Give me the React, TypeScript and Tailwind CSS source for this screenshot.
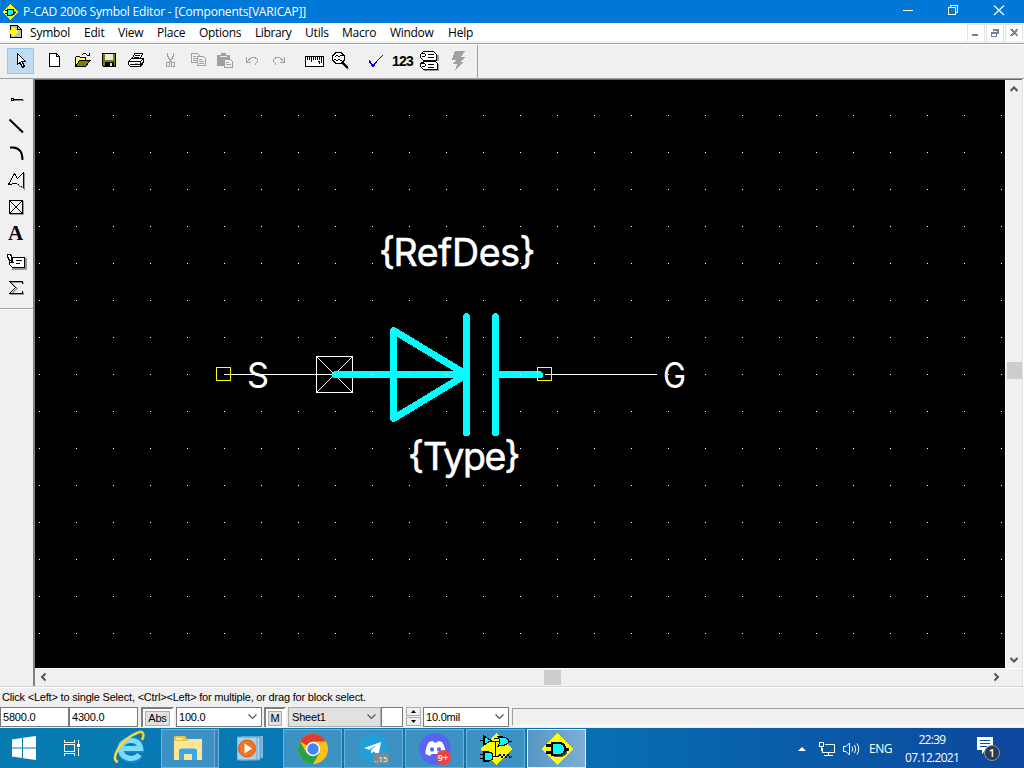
import type { ReactNode } from 'react';

const UI = 'font-["Open_Sans","Noto_Sans",sans-serif]';

type IconProps = { children: ReactNode; cls?: string };

function Tool({ children, cls = '' }: IconProps) {
  return (
    <span className={`block h-[26px] w-[27px] shrink-0 ${cls}`}>
      <svg width="27" height="26" viewBox="0 0 27 26" shapeRendering="crispEdges" fill="none" stroke="#000" strokeWidth="1">
        {children}
      </svg>
    </span>
  );
}

function SideTool({ children }: IconProps) {
  return (
    <svg className="block shrink-0" width="27" height="27" viewBox="0 0 27 27" shapeRendering="crispEdges" fill="none" stroke="#000">
      {children}
    </svg>
  );
}

function Gate({ size, className = '' }: { size: number; className?: string }) {
  return (
    <svg className={className} width={size} height={size} viewBox="0 0 32 32" shapeRendering="crispEdges">
      <path d="M16 0L32 16L16 32L0 16Z" fill="#ff0" />
      <path d="M13 11H21Q26 13 26 18T21 24H13Z" fill="#555" />
      <path d="M5 12.5H12M5 19.5H12M23 16.5H28" stroke="#000" strokeWidth="2.4" />
      <path d="M11 10H19Q24 11 24 16T19 22H11Z" fill="#0ff" stroke="#000" strokeWidth="2" />
    </svg>
  );
}

function TitleBar() {
  return (
    <div className="flex h-[23px] shrink-0 items-center bg-[#0078d7] text-white">
      <Gate size={16} className="ml-[2px]" />
      <span className="ml-[5px] w-[300px] whitespace-pre text-[12px] leading-[23px] tracking-[-0.19px]">P-CAD 2006 Symbol Editor - [Components[VARICAP]]</span>
      <svg className="ml-auto mr-[19px]" width="102" height="23" viewBox="903 0 102 23" fill="none" stroke="#fff" shapeRendering="crispEdges">
        <path d="M903 10.5H913" />
        <path d="M948.5 7.5H955.5V14.5H948.5ZM950.5 7.5V5.5H957.5V12.5H955.5" />
        <path d="M994 5.500L1004 15M1004 5.500L994 15" shapeRendering="auto" strokeWidth="1.2" />
      </svg>
    </div>
  );
}

function MenuBar() {
  return (
    <div className="flex h-[18px] shrink-0 bg-white text-[12px] leading-[19px] text-black">
      <svg className="ml-[8px] mt-px w-[14px]" width="14" height="15" viewBox="0 0 14 15" shapeRendering="crispEdges">
        <path d="M2.500 1.500H9.500L13.500 5.500V13.500H2.500Z" fill="#c0c0c0" stroke="#000" />
        <path d="M9.500 1.500V5.500H13.500" fill="none" stroke="#000" />
        <path d="M5 3L10 8L5 13L0 8Z" fill="#ff0" />
      </svg>
      <span className="ml-[8px] w-[54px] tracking-[-0.2px]">Symbol</span>
      <span className="w-[34px] tracking-[-0.2px]">Edit</span>
      <span className="w-[39px] tracking-[-0.2px]">View</span>
      <span className="w-[42px] tracking-[-0.2px]">Place</span>
      <span className="w-[56px] tracking-[-0.3px]">Options</span>
      <span className="w-[50px] tracking-[-0.4px]">Library</span>
      <span className="w-[37px] tracking-[-0.2px]">Utils</span>
      <span className="w-[48px] tracking-[-0.2px]">Macro</span>
      <span className="w-[58px] tracking-[-0.3px]">Window</span>
      <span className="tracking-[-0.2px]">Help</span>
      <div className="ml-auto mr-px mt-px flex gap-px">
        {[
          'M5 10H11V12H5Z',
          'M7 5H13V10H11V7H7ZM5 8H11V13H5ZM6 10V12H10V10Z',
          'M5 5H8L9.500 7L11 5H13V6L11 8.500L13 11V12H11L9.500 10L8 12H5V11L7.500 8.500L5 6Z',
        ].map((d) => (
          <svg key={d} className="border border-[#e3e3e3] bg-white" width="18" height="18" viewBox="0 0 18 18" shapeRendering="crispEdges">
            <path d={d} fill="#748494" fillRule="evenodd" />
          </svg>
        ))}
      </div>
    </div>
  );
}

function Toolbar() {
  return (
    <div className="flex h-[33px] shrink-0 bg-[#f0f0f0]">
      <div className="flex h-[33px] w-[478px] border-r border-[#a0a0a0] pl-[7px] pt-[3px]">
        <Tool cls="bg-[#bfdcf3] outline outline-1 -outline-offset-1 outline-[#90c8f6]">
          <path d="M10.500 5.500V16.500L13 14.500L15.500 19.500L17.500 18.500L15 13.500H18.500Z" fill="#fff" />
        </Tool>
        <Tool cls="ml-[7px]">
          <path d="M8.500 5.500H15.500L18.500 8.500V18.500H8.500Z" fill="#fff" />
          <path d="M15.500 5.500V8.500H18.500" />
        </Tool>
        <Tool>
          <path d="M7.500 18V9.500L8.500 8.500H11.500L12.500 9.500H17.500V12.500" fill="#ffff80" />
          <path d="M8 9H11L12 10H17V12H12L8 17Z" fill="#ffff60" stroke="none" />
          <path d="M7.500 18.500L11.500 12.500H22L17.500 18.500Z" fill="#808000" />
          <path d="M14 6.500H15M15 5.500H18M18 6.500H19M19 7.500H22M21.500 5V8" />
        </Tool>
        <Tool>
          <path d="M7.500 5.500H20.500V18.500H8.500L7.500 17.500Z" fill="#808000" />
          <path d="M10 6H18V12H10Z" fill="#e8e8e8" stroke="none" />
          <path d="M10 13.500H19V19H10Z" fill="#000" stroke="none" />
          <path d="M15 15H17V18H15Z" fill="#e8e8e8" stroke="none" />
        </Tool>
        <Tool>
          <path d="M10.500 10.500L12.500 5.500H20.500L18.500 10.500Z" fill="#fff" />
          <path d="M13 7.500H18M12 9.500H17" />
          <path d="M6.500 13.500L9.500 10.500H21.500V14.500L18.500 18.500H8.500L6.500 16.500Z" fill="#fff" />
          <path d="M7 13.500H18.500V18M18.500 13.500L21 11M8 16.500H18M19 16L22 13" />
          <path d="M13 15H16" stroke="#cc0" />
        </Tool>
        <Tool cls="ml-[7px]">
          <g stroke="#a0a0a0">
            <path d="M11.500 5V8L15.500 14M17.500 5V8L13.500 14" strokeWidth="1.4" />
            <path d="M10.500 14.500H13.500V18.500H10.500ZM15.500 14.500H18.500V18.500H15.500Z" />
          </g>
        </Tool>
        <Tool>
          <g stroke="#a0a0a0" fill="#f0f0f0">
            <path d="M8.500 5.500H14.500L16.500 7.500V14.500H8.500Z" />
            <path d="M10 8.500H13M10 10.500H14M10 12.500H14" />
            <path d="M14.500 8.500H20.500L22.500 10.500V17.500H14.500Z" />
            <path d="M16 11.500H19M16 13.500H21M16 15.500H21" />
          </g>
        </Tool>
        <Tool>
          <path d="M7 7H11V5H16V7H20V18H7Z" fill="#a0a0a0" stroke="none" />
          <path d="M10 8.500H17" stroke="#f0f0f0" />
          <path d="M14.500 11.500H20.500L22.500 13.500V19.500H14.500Z" stroke="#a0a0a0" fill="#f0f0f0" />
          <path d="M16 14.500H19M16 16.500H21" stroke="#a0a0a0" />
        </Tool>
        <Tool>
          <path d="M9.500 9V14.500H14M10 14L13 10.500L15 9.500H18L20.500 11.500V13.500L18 16.500" stroke="#a0a0a0" />
        </Tool>
        <Tool>
          <path d="M20.500 9V14.500H16M20 14L17 10.500L15 9.500H12L9.500 11.500V13.500L12 16.500" stroke="#a0a0a0" />
        </Tool>
        <Tool cls="ml-[10px]">
          <path d="M4.500 8.500H22.500V18.500H4.500Z" fill="#fff" strokeWidth="1.4" />
          <path d="M6.500 9V12M8.500 9V12M10.500 9V14M12.500 9V12M14.500 9V12M16.500 9V12M18.500 9V12M20.500 9V15M18.500 13V16M17 13.500H18" />
        </Tool>
        <Tool>
          <path d="M15 16L20.500 21.500" stroke="#999" strokeWidth="2" />
          <path d="M14.500 14.500L20 20" strokeWidth="2.600" />
          <path d="M8 4.500H13L16.500 8V12L13 15.500H8L4.500 12V8Z" fill="#fff" />
          <path d="M7 8.500H8M8 7.500H10M10 8.500H12M12 7.500H15M6 11.500H8M8 12.500H10M10 11.500H12M12 12.500H14" />
        </Tool>
        <Tool cls="ml-[7px]">
          <path d="M7 13.500L11 17.500L20.500 7.500" stroke="#00f" />
          <path d="M7 12.500L11 18.500L14 14" stroke="#00f" strokeWidth="1.6" />
        </Tool>
        <span className='h-[26px] w-[27px] pl-[3px] font-["Liberation_Sans",sans-serif] text-[14px] font-bold leading-[26px] tracking-[-0.8px] text-black'>123</span>
        <Tool>
          <path d="M19 7H23V13H19ZM8 22H23V23H8ZM22 16H23V23H22Z" fill="#999" stroke="none" />
          <path d="M7.500 3.500H17.500L20.500 6.500V12.500H7.500L4.500 9.500V6.500Z" fill="#fff" strokeWidth="1.4" />
          <path d="M6 5.500H9M9.500 6V8M12 6.500H18M12 9.500H18M6 8.500H9" />
          <path d="M8.500 13.500H19.500L21.500 15.500V21.500H7.500L4.500 18.500V15.500Z" fill="#fff" strokeWidth="1.4" />
          <path d="M6 15.500H9M9.500 16V18M12 16.500H18M12 19.500H18M6 18.500H9" />
        </Tool>
        <Tool>
          <path d="M12 3H22L18 9H22L17 14H20L12 23L14 16H10L13 12H9Z" fill="#a0a0a0" stroke="none" />
        </Tool>
      </div>
    </div>
  );
}

function SideBar() {
  return (
    <div className="flex w-[35px] shrink-0 flex-col border-r-2 border-[#808080] bg-[#f0f0f0]">
      <div className="flex h-[230px] flex-col border-b border-[#a0a0a0] pl-[3px] pt-[8px]">
        <SideTool>
          <path d="M11 13.500H21" stroke="#888" />
          <path d="M8.500 11.500H10.500V13.500H8.500ZM11 12.500H20" />
        </SideTool>
        <SideTool>
          <path d="M6.500 5.500L20 18.500" strokeWidth="2" shapeRendering="auto" />
        </SideTool>
        <SideTool>
          <path d="M7 6.500H10C15.500 6.800 19.500 10.500 19.500 19" strokeWidth="2" shapeRendering="auto" />
        </SideTool>
        <SideTool>
          <path d="M20.500 4.500V20.500L13.500 15.500L5.500 16.500L11.500 5.500L14.500 10.500L20.500 4.500" />
          <path d="M21.500 5V21L14 16.500" stroke="#999" />
        </SideTool>
        <SideTool>
          <path d="M7 19.500H20.500V6" stroke="#999" />
          <path d="M6.500 5.500H19.500V18.500H6.500Z" strokeWidth="1.4" />
          <path d="M7 6L19 18M19 6L7 18" />
        </SideTool>
        <span className='h-[27px] w-[27px] pl-[5px] font-["Liberation_Serif",serif] text-[21px] font-bold leading-[23px] text-black'>A</span>
        <SideTool>
          <path d="M9 19.500H22.500V9" stroke="#999" strokeWidth="2" />
          <path d="M9 8.500H21.500V18.500H9.500L6.500 15.500V12" fill="#fff" strokeWidth="1.4" />
          <path d="M4.500 5.500H7L9 8V12L6.500 11L4.500 8Z" fill="#fff" strokeWidth="1.400" />
          <path d="M7 13.500H11M13 11.500H19M13 14.500H17" />
        </SideTool>
        <SideTool>
          <path d="M20.500 8V6.500H8L14 12.500L8 18.500H20.500V16" stroke="#999" />
          <path d="M19.500 8V5.500H6.500L12.500 11.500L6.500 17.500H19.500V15" />
        </SideTool>
      </div>
      <div className="h-px bg-white" />
    </div>
  );
}

const gridX = Array.from({ length: 27 }, (_, i) => 39 + i * 37);
const gridY = Array.from({ length: 15 }, (_, i) => 115 + i * 37);

function Drawing() {
  return (
    <svg className='block bg-black font-["Inter",sans-serif]' width="970" height="588" viewBox="35 80 970 588" shapeRendering="crispEdges" fill="none">
      <g stroke="#fff">
        <path d="M224 374.500H335M545 374.500H657" />
        <path d="M316.500 356.500H352.500V392.500H316.500ZM317 357L352 392M352 357L317 392" />
      </g>
      <g stroke="#0ff" strokeWidth="7" strokeLinecap="round" strokeLinejoin="round">
        <path d="M335.500 374.500H466.500M393.500 330.500L466.500 374.500L393.500 418.500ZM466.500 316.500V432.500M495.500 316.500V432.500M495.500 374.500H539.500" />
      </g>
      <path d="M216.500 367.500H230.500V380.500H216.500ZM537.500 367.500H551.500V380.500H537.500Z" stroke="#ff0" />
      <g fill="#fff" stroke="#fff" strokeWidth="0.6" fontSize="37.5">
        <text>
          <tspan x="379" y="264">{'{'}</tspan>
          <tspan x="393.500" y="265.500" letterSpacing="-0.3">RefDes</tspan>
          <tspan x="519.500" y="264">{'}'}</tspan>
        </text>
        <text>
          <tspan x="408" y="468">{'{'}</tspan>
          <tspan x="423" y="469.500" letterSpacing="-1.5">Type</tspan>
          <tspan x="504.500" y="468">{'}'}</tspan>
        </text>
      </g>
      <g fill="#fff" fontSize="35">
        <text x="247" y="388" textLength="22" lengthAdjust="spacingAndGlyphs">S</text>
        <text x="663" y="388" textLength="23" lengthAdjust="spacingAndGlyphs">G</text>
      </g>
      <g fill="#fff">
        {gridY.map((y) => gridX.map((x) => <rect key={`${x}-${y}`} x={x} y={y} width="1" height="1" />))}
      </g>
    </svg>
  );
}

function Chevron({ dir }: { dir: 'up' | 'down' | 'left' | 'right' }) {
  const d = {
    up: 'M1.500 6L5 2.500L8.500 6',
    down: 'M1.500 3L5 6.500L8.500 3',
    left: 'M6.500 1.500L3 5L6.500 8.500',
    right: 'M3.500 1.500L7 5L3.500 8.500',
  }[dir];
  return (
    <svg width="10" height="10" viewBox="0 0 10 10" fill="none" stroke="#555" strokeWidth="2">
      <path d={d} />
    </svg>
  );
}

function Workspace() {
  return (
    <div className="flex h-[607px] shrink-0">
      <SideBar />
      <div className="flex flex-col">
        <div className="h-px bg-[#696969]" />
        <div className="flex h-[588px]">
          <Drawing />
          <div className="flex w-[17px] flex-col items-center border-l border-white bg-[#f0f0f0] pb-[3px] pt-[5px]">
            <Chevron dir="up" />
            <div className="mt-[267px] h-[17px] w-[15px] bg-[#cdcdcd]" />
            <div className="mt-auto flex"><Chevron dir="down" /></div>
          </div>
        </div>
        <div className="flex h-[18px] w-[987px] items-center border-t border-white bg-[#f0f0f0] pb-px pl-[4px]">
          <Chevron dir="left" />
          <div className="ml-[495px] h-[15px] w-[17px] bg-[#cdcdcd]" />
          <div className="ml-[430px] flex"><Chevron dir="right" /></div>
        </div>
      </div>
      <div className="w-px bg-[#e3e3e3]" />
      <div className="grow bg-white" />
    </div>
  );
}

function ComboArrow() {
  return (
    <svg className="ml-auto mr-[4px]" width="9" height="6" viewBox="0 0 9 6" fill="none" stroke="#555" strokeWidth="1.200">
      <path d="M0.500 0.500L4.500 4.500L8.500 0.500" />
    </svg>
  );
}

function StatusBar() {
  const field = 'flex h-[20px] items-center border border-[#7a7a7a] bg-white pl-[2px]';
  return (
    <div className='flex h-[42px] shrink-0 flex-col bg-[#f0f0f0] font-["Liberation_Sans",sans-serif] text-[11px] tracking-[-0.2px] text-black'>
      <div className="h-px bg-[#d8d8d8]" />
      <div className="h-[20px] whitespace-pre border-t border-white pl-[2px] leading-[18px]">Click &lt;Left&gt; to single Select, &lt;Ctrl&gt;&lt;Left&gt; for multiple, or drag for block select.</div>
      <div className="flex h-[21px]">
        <div className={`${field} w-[69px]`}>5800.0</div>
        <div className={`${field} w-[69px]`}>4300.0</div>
        <div className="ml-[3px] flex h-[20px] w-[33px] items-center justify-center border-2 border-b-0 border-[#808080] border-r-white bg-white pt-px">
          <span className="flex h-[15px] w-[25px] items-center justify-center border border-[#adadad] bg-[#e1e1e1]">Abs</span>
        </div>
        <div className={`${field} ml-[2px] w-[86px]`}>100.0<ComboArrow /></div>
        <div className="ml-[2px] flex h-[20px] w-[22px] items-center justify-center border-2 border-b-0 border-[#808080] border-r-white bg-white pt-px">
          <span className="flex h-[15px] w-[14px] items-center justify-center border border-[#adadad] bg-[#e1e1e1]">M</span>
        </div>
        <div className="ml-[2px] flex h-[20px] w-[93px] items-center border border-[#adadad] bg-[#e1e1e1] pl-[3px]">Sheet1<ComboArrow /></div>
        <div className="h-[20px] w-[22px] border border-[#7a7a7a] bg-white" />
        <div className="ml-[3px] flex h-[19px] w-[15px] flex-col gap-px">
          <span className="flex h-[9px] items-center justify-center border border-[#adadad] bg-[#f0f0f0]"><svg width="5" height="3" viewBox="0 0 5 3"><path d="M0 3L2.500 0L5 3Z" /></svg></span>
          <span className="flex h-[9px] items-center justify-center border border-[#adadad] bg-[#f0f0f0]"><svg width="5" height="3" viewBox="0 0 5 3"><path d="M0 0L2.500 3L5 0Z" /></svg></span>
        </div>
        <div className={`${field} ml-[2px] w-[86px]`}>10.0mil<ComboArrow /></div>
        <div className="ml-[3px] h-[18px] grow border border-r-0 border-[#a0a0a0] border-b-white mt-px" />
      </div>
    </div>
  );
}

function TaskButton({ children, active = false }: { children: ReactNode; active?: boolean }) {
  return (
    <div className={active
      ? 'flex h-[39px] w-[59px] items-center justify-center border border-[#e4f1f9] bg-linear-to-r from-[#5796c4] to-[#7eaed2]'
      : 'flex h-[39px] w-[59px] items-center justify-center border border-[#71b1d5] bg-[#3c92c3]'}>
      {children}
    </div>
  );
}

function Schematic() {
  return (
    <svg width="32" height="32" viewBox="0 0 32 32" shapeRendering="crispEdges" stroke="#000" strokeWidth="1.200">
      <path d="M16 0L32 16L16 32L0 16Z" fill="#ff0" stroke="none" />
      <path d="M0 7.500H4M11 8.500H19M14 5.500H19M27 8.500H32M0 21.500H4M0 25.500H4M12 23.500H18M15.500 9V23" fill="none" />
      <path d="M4 3L11 7.500L4 12Z" fill="#0ff" />
      <path d="M18 4H23Q28 5 29 8.500Q27 13 18 13Q21 8.500 18 4Z" fill="#0ff" />
      <path d="M4 19H9Q13 20 13 23.500T9 28H4Z" fill="#0ff" />
      <path d="M18 24L20 21L22 25L24 21L26 25L28 21L30 25L32 23" fill="none" />
    </svg>
  );
}

function Taskbar() {
  return (
    <div className={`flex h-[40px] shrink-0 items-start bg-linear-to-r from-[#087bb2] via-[#0876b6] via-50% to-[#0d479d] pt-px text-white ${UI}`}>
      <svg className="ml-[12px] mt-[7px]" width="24" height="24" viewBox="0 0 24 24" fill="#fff">
        <path d="M0 3.500L10 2V11.500H0ZM11 1.800L24 0V11.500H11ZM0 12.500H10V22L0 20.500ZM11 12.500H24V24L11 22.200Z" />
      </svg>
      <svg className="ml-[28px] mt-[11px]" width="16" height="16" viewBox="0 0 16 16" fill="none" stroke="#fff" shapeRendering="crispEdges">
        <path d="M0.500 0V2.500H10.500V0M0.500 4.500H10.500V11.500H0.500ZM0.500 16V13.500H10.500V16M14.500 0V4M14.500 8V16" />
        <path d="M13 4H16V7H13Z" fill="#fff" stroke="none" />
      </svg>
      <svg className="ml-[33px] mt-[1px]" width="34" height="34" viewBox="0 0 34 34" fill="none">
        <path d="M26.500 25C23 32 8 30.500 7.500 19C7 8 26.500 6 27.500 19H9" stroke="#1b8bd0" strokeWidth="7" />
        <path d="M26.500 24.500C22 31 8 29.500 7.500 19C7 8.500 26.500 7 27.500 18.500H10" stroke="#7bdcfb" strokeWidth="5.200" />
        <path d="M5 32C-4 30 8 9 24 3C30 0 32 4 29 10" stroke="#f6cc25" strokeWidth="2.600" />
        <path d="M4 31C-3 28 9 9 24 3" stroke="#fff08a" strokeWidth="0.800" />
      </svg>
      <div className="ml-[14px] flex h-[39px]">
        <div className="flex h-[39px] w-[54px] items-center justify-center border border-[#71b1d5] bg-[#3c92c3] pr-px">
          <svg width="28" height="26" viewBox="0 0 28 26">
            <path d="M0 1.500Q0 0 1.500 0H11L13 3H28V24H0Z" fill="#f5c43b" />
            <path d="M0 5H13L15 3H28V24H0Z" fill="#ffe695" />
            <path d="M2 2H9V3.500H2Z" fill="#fff2bf" />
            <path d="M5 24V14L7 12.500H21L23 14V24H18V18H10V24Z" fill="#38a8e8" />
          </svg>
        </div>
        <div className="h-[39px] w-[4px] border border-l-0 border-[#71b1d5] bg-[#2b87bd]" />
      </div>
      <svg className="ml-[18px] mt-[7px]" width="26" height="26" viewBox="0 0 26 26">
        <path d="M5 0H26V22L5 25Z" fill="#7eb8de" />
        <path d="M3 1H23V24H3Z" fill="#b3d8ef" stroke="#5599c7" />
        <path d="M0 1H20V24H0Z" fill="#a7d0ea" stroke="#66a4cd" />
        <circle cx="10" cy="12.500" r="8.500" fill="#f37421" stroke="#d65c13" />
        <path d="M7.500 7.500L15 12.500L7.500 17.500Z" fill="#fff" />
      </svg>
      <div className="ml-[20px] flex gap-[2px]">
        <TaskButton>
          <svg width="30" height="30" viewBox="0 0 30 30">
            <circle cx="15" cy="15" r="15" fill="#fbc116" />
            <path d="M15 15L2 7.500A15 15 0 0 1 28 7.500H15Z" fill="#e33b2e" />
            <path d="M2 7.500A15 15 0 0 0 15 30L21.500 18.750L8.500 18.750Z" fill="#28a249" />
            <circle cx="15" cy="15" r="7.200" fill="#fff" />
            <circle cx="15" cy="15" r="5.700" fill="#4285f4" />
          </svg>
        </TaskButton>
        <TaskButton>
          <div className="relative">
            <svg width="29" height="29" viewBox="0 0 29 29">
              <circle cx="14.500" cy="14.500" r="14.500" fill="#229ed9" />
              <path d="M5 14L22 8L19.500 21L14.500 17.500L12 19.500V16L18 11L10 15.800Z" fill="#fff" />
            </svg>
            <span className="absolute left-[14px] top-[19px] flex h-[11px] w-[16px] items-center justify-center rounded-[2px] bg-[#828a91] text-[8px] leading-none">..15</span>
          </div>
        </TaskButton>
        <TaskButton>
          <div className="relative">
            <svg width="32" height="32" viewBox="0 0 32 32">
              <circle cx="16" cy="16" r="16" fill="#5865f2" />
              <path d="M10 9L14 8L15 9.500H18L19 8L23 9Q27 15 26.500 21L22 23L20.500 21H12.500L11 23L6.500 21Q6 15 10 9Z" fill="#fff" />
              <ellipse cx="13" cy="16.500" rx="2" ry="2.200" fill="#5865f2" />
              <ellipse cx="20" cy="16.500" rx="2" ry="2.200" fill="#5865f2" />
            </svg>
            <span className="absolute left-[17px] top-[17px] flex h-[15px] w-[15px] items-center justify-center rounded-full bg-[#ed4245] text-[9px] font-semibold leading-none">9+</span>
          </div>
        </TaskButton>
        <TaskButton><Schematic /></TaskButton>
        <TaskButton active><Gate size={32} /></TaskButton>
      </div>
      <div className="ml-auto mr-[24px] flex h-[39px] items-center text-[12px]">
        <svg width="8" height="4" viewBox="0 0 8 4" fill="#fff"><path d="M0 4L4 0L8 4Z" /></svg>
        <svg className="ml-[13px]" width="17" height="14" viewBox="0 0 17 14" fill="none" stroke="#fff" shapeRendering="crispEdges">
          <path d="M6 2.500H15.500V10.500H3.500V6M9.500 11V13M5 13.500H14M0.500 0.500H4.500V4.500H0.500ZM2.500 4V9" />
        </svg>
        <svg className="ml-[7px]" width="18" height="14" viewBox="0 0 18 14" fill="none" stroke="#fff">
          <path d="M0.500 4.500H3L6.500 1V13L3 9.500H0.500Z" />
          <path d="M9 4.500Q10.500 7 9 9.500M11.500 3Q14 7 11.500 11M14 1.500Q17.500 7 14 12.500" />
        </svg>
        <span className="ml-[8px] w-[36px] tracking-[-0.5px]">ENG</span>
        <span className="w-[54px] whitespace-nowrap leading-[18px] tracking-[-0.7px] text-center">22:39<br />07.12.2021</span>
        <div className="relative ml-[18px] h-[24px] w-[23px]">
          <svg width="17" height="18" viewBox="0 0 17 18"><path d="M0 0H16V13H9L5 17V13H0Z" fill="#fff" /><path d="M3 3.500H13M3 6.500H13M3 9.500H10" stroke="#0b4fa0" /></svg>
          <span className="absolute left-[7px] top-[8px] flex h-[16px] w-[16px] items-center justify-center rounded-full border border-[#8b98a8] bg-[#2a3a50] text-[11px] font-semibold leading-none">1</span>
        </div>
      </div>
    </div>
  );
}

export default function App() {
  return (
    <div className={`flex h-[768px] w-[1024px] flex-col overflow-hidden bg-[#f0f0f0] ${UI}`}>
      <TitleBar />
      <MenuBar />
      <div className="h-[2px] shrink-0 bg-[#f0f0f0]" />
      <div className="h-px shrink-0 bg-[#a0a0a0]" />
      <div className="h-px shrink-0 bg-white" />
      <Toolbar />
      <div className="h-px shrink-0 bg-[#a0a0a0]" />
      <Workspace />
      <StatusBar />
      <Taskbar />
    </div>
  );
}
